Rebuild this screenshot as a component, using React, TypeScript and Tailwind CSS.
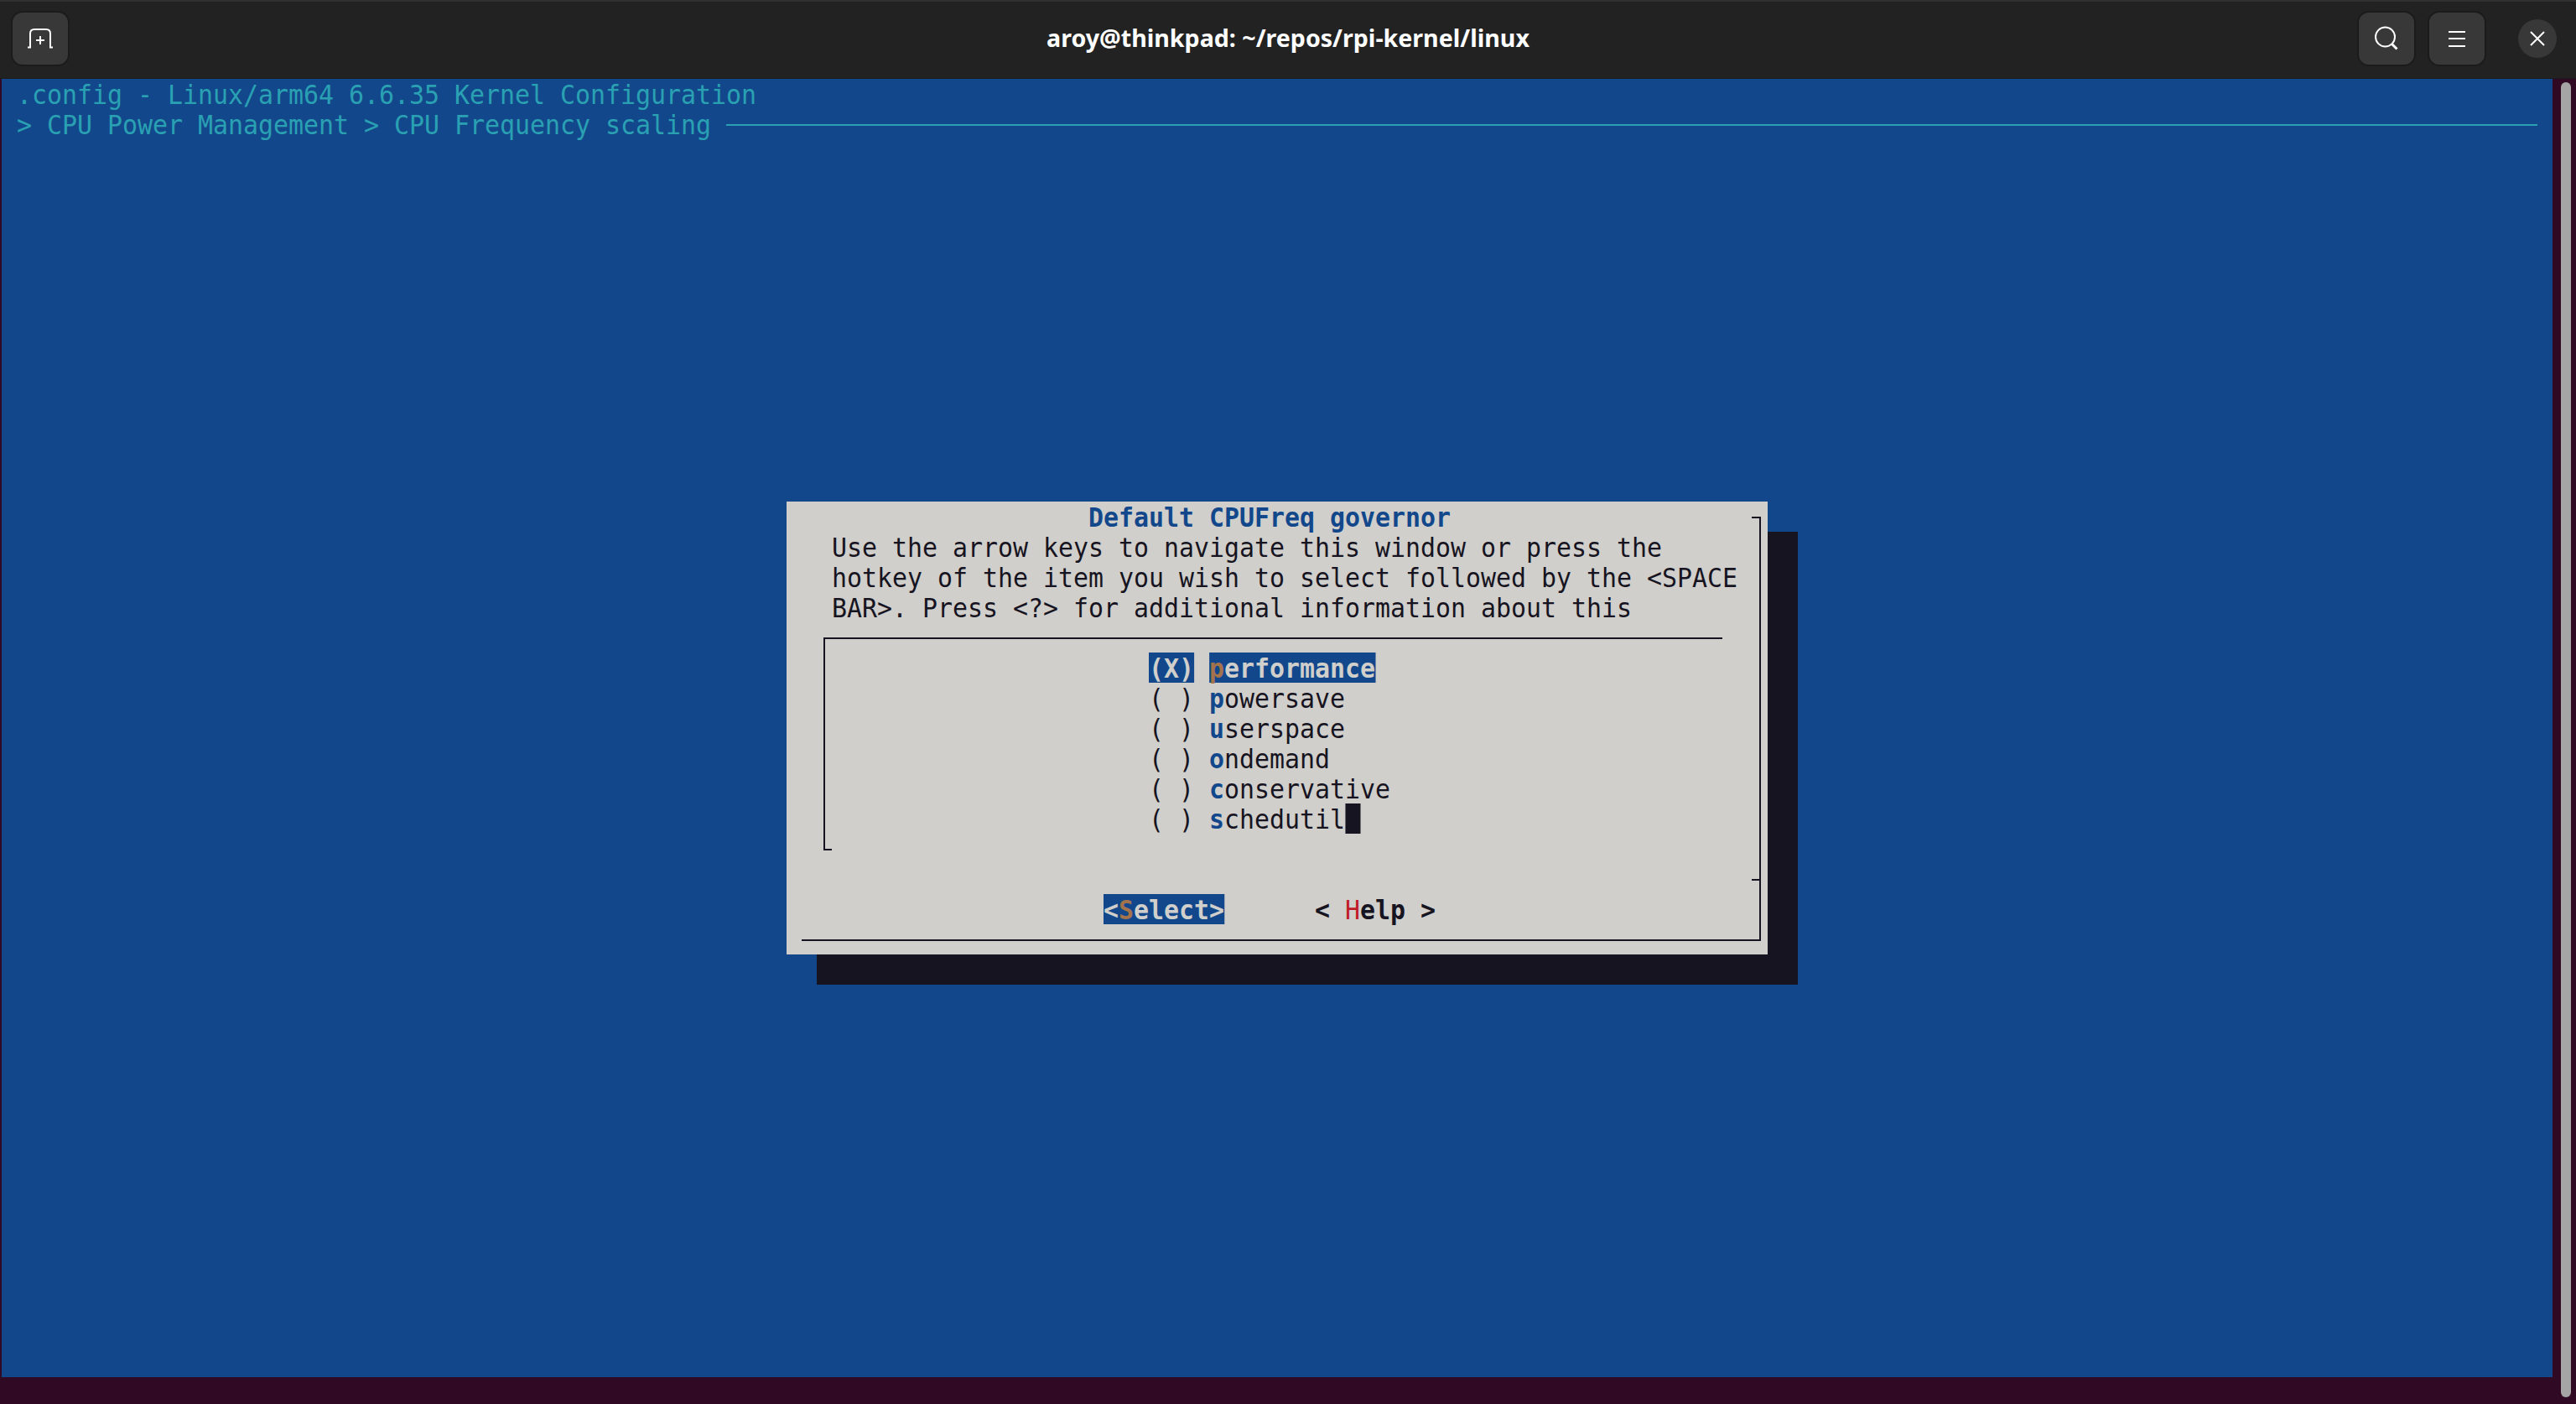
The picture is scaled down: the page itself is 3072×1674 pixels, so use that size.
const mono =
  "origin-left scale-x-[0.9492] whitespace-pre font-['DejaVu_Sans_Mono',monospace] text-[31.500px] leading-[39px]";

function Line({ className, textClass, children }: { className: string; textClass?: string; children: React.ReactNode }) {
  return (
    <div className={`h-9 ${className}`}>
      <div className={`${mono} ${textClass ?? ""}`}>{children}</div>
    </div>
  );
}

function Item({ label }: { label: string }) {
  return (
    <Line className="pl-[386px]">
      {"( ) "}
      <span className="font-bold text-[#12488b]">{label[0]}</span>
      {label.slice(1)}
    </Line>
  );
}

function HeaderButton({ children }: { children: React.ReactNode }) {
  return (
    <div className="flex h-[66px] w-[70px] items-center justify-center rounded-[14px] border-2 border-[#1b1b1b] bg-[#383838]">
      {children}
    </div>
  );
}

export default function App() {
  return (
    <div className="flex h-[1674px] w-[3072px] flex-col overflow-hidden bg-[#300a24]">
      <header className="flex h-[94px] shrink-0 items-center border-t-2 border-b border-t-[#303030] border-b-[#1b1b1b] bg-[#222222] px-[23px] pb-[3px]">
        <div className="flex flex-1">
          <div className="-ml-[10px]">
            <HeaderButton>
              <svg width="30" height="24" viewBox="0 0 30 24" fill="none" stroke="#ffffff" strokeWidth="2">
                <path d="M0 22.500h3V6q0-5 5-5h14q5 0 5 5V22.500h3" />
                <path d="M15 9v10M10 14h10" />
              </svg>
            </HeaderButton>
          </div>
        </div>
        <h1 className="mb-0.5 font-['Noto_Sans',sans-serif] text-[28.600px] font-bold text-white">
          aroy@thinkpad: ~/repos/rpi-kernel/linux
        </h1>
        <div className="flex flex-1 items-center justify-end">
          <HeaderButton>
            <svg width="30" height="30" viewBox="0 0 30 30" fill="none" stroke="#ffffff">
              <circle cx="13.500" cy="13" r="11.500" strokeWidth="2" />
              <path d="M21.500 21.500l6 6" strokeWidth="3" />
            </svg>
          </HeaderButton>
          <div className="ml-[14px]">
            <HeaderButton>
              <div className="flex w-5 flex-col gap-[6.500px]">
                <div className="h-0.5 bg-white" />
                <div className="h-0.5 bg-white" />
                <div className="h-0.5 bg-white" />
              </div>
            </HeaderButton>
          </div>
          <div className="ml-[38px] flex h-[46px] w-[46px] items-center justify-center rounded-full bg-[#383838]">
            <svg width="18" height="18" viewBox="0 0 18 18" stroke="#ffffff" strokeWidth="2">
              <path d="M1 1l16 16M17 1L1 17" />
            </svg>
          </div>
        </div>
      </header>

      <div className="flex flex-1">
        <div className="ml-[2px] h-[1548px] w-[3042px] bg-[#12488b] text-[#2aa1b3]">
          <Line className="pl-[18px]">.config - Linux/arm64 6.6.35 Kernel Configuration</Line>
          <div className="flex h-9 items-center pl-[18px]">
            <div className="h-9 w-[846px] shrink-0">
              <div className={mono}>{"> CPU Power Management > CPU Frequency scaling"}</div>
            </div>
            <div className="mt-0.5 mr-[18px] h-0.5 flex-1 bg-[#2aa1b3]" />
          </div>

          <div className="relative mt-[432px] ml-[936px] h-[540px] w-[1170px] bg-[#d0cfcc] text-[#171421] shadow-[36px_36px_0_#171421]">
            {/* outer frame drawn over the dialog */}
            <div className="absolute top-[18px] right-2 bottom-4 left-[18px] border-r-2 border-b-2 border-[#171421]">
              <div className="absolute top-0 right-0 h-0.5 w-[9px] bg-[#171421]" />
              <div className="absolute top-[432px] right-0 h-0.5 w-[9px] bg-[#171421]" />
            </div>

            <Line className="pl-[360px]" textClass="font-bold text-[#12488b]">Default CPUFreq governor</Line>
            <Line className="pl-[54px]">Use the arrow keys to navigate this window or press the</Line>
            <Line className="pl-[54px]">hotkey of the item you wish to select followed by the {"<SPACE"}</Line>
            <Line className="pl-[54px]">BAR&gt;. Press &lt;?&gt; for additional information about this</Line>

            <div className="relative mt-[18px] ml-[44px] h-[254px] w-[1072px] border-t-2 border-l-2 border-[#171421] pt-4">
              <div className="absolute bottom-0 left-0 h-0.5 w-2 bg-[#171421]" />
              <Line className="pl-[386px]">
                <span className="inline-block h-9 bg-[#12488b] align-top font-bold text-[#d0cfcc]">(X)</span>
                {" "}
                <span className="inline-block h-9 bg-[#12488b] align-top font-bold text-[#d0cfcc]">
                  <span className="text-[#a2734c]">p</span>erformance
                </span>
              </Line>
              <Item label="powersave" />
              <Item label="userspace" />
              <Item label="ondemand" />
              <Item label="conservative" />
              <Line className="pl-[386px]">
                {"( ) "}
                <span className="font-bold text-[#12488b]">s</span>chedutil
                <span className="inline-block h-9 w-[1ch] bg-[#171421] align-top" />
              </Line>
            </div>

            <Line className="mt-[52px] pl-[378px]" textClass="font-bold">
              <span className="inline-block h-9 bg-[#12488b] align-top text-[#d0cfcc]">
                {"<"}
                <span className="text-[#a2734c]">S</span>
                {"elect>"}
              </span>
              {"      < "}
              <span className="font-normal text-[#c01c28]">H</span>
              {"elp >"}
            </Line>
          </div>
        </div>
        <div className="mt-1 ml-[10px] h-[1568px] w-3 rounded-full bg-[#a5a5a5]" />
      </div>
    </div>
  );
}
